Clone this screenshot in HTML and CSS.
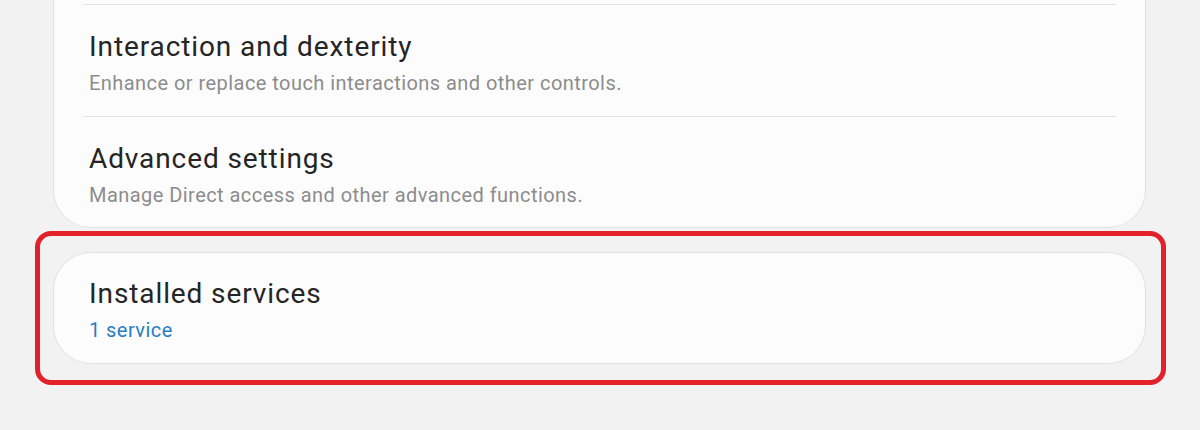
FILE: index.html
```html
<!DOCTYPE html>
<html>
<head>
<meta charset="utf-8">
<link rel="stylesheet" href="styles.css">
</head>
<body>
<div class="page">
  <div class="card card-top">
    <div class="divider"></div>
    <div class="row">
      <div class="title">Interaction and dexterity</div>
      <div class="sub">Enhance or replace touch interactions and other controls.</div>
    </div>
    <div class="divider"></div>
    <div class="row row-last">
      <div class="title">Advanced settings</div>
      <div class="sub">Manage Direct access and other advanced functions.</div>
    </div>
  </div>
  <div class="highlight">
    <div class="card card-single">
      <div class="row row-single">
        <div class="title">Installed services</div>
        <div class="sub blue">1 service</div>
      </div>
    </div>
  </div>
</div>
</body>
</html>
```
FILE: styles.css
```css
html, body {
  margin: 0;
  padding: 0;
  background: #f2f2f2;
  width: 1200px;
  height: 430px;
  overflow: hidden;
  font-family: Roboto, "Liberation Sans", sans-serif;
}
.page {
  padding: 0 54px 0 53px;
}
.card {
  background: #fcfcfc;
  border: 1px solid #e2e2e2;
}
.card-top {
  border-top: none;
  border-radius: 0 0 38px 38px;
  padding: 4px 29px 0 29px;
}
.divider {
  height: 1px;
  background: #e4e4e4;
}
.row {
  box-sizing: border-box;
  padding: 25px 5px 0 6px;
  height: 111px;
}
.row-last {
  height: 110px;
}
.row-single {
  height: 110px;
  padding-top: 24px;
}
.title {
  font-size: 28px;
  line-height: 34px;
  letter-spacing: 0.9px;
  color: #252525;
}
.sub {
  margin-top: 6px;
  font-size: 20px;
  line-height: 26px;
  letter-spacing: 0.45px;
  color: #8c8c8c;
}
.sub.blue {
  color: #2b7dc2;
}
.highlight {
  margin: 3px -20px 0 -18px;
  border: 5px solid #e2212b;
  border-radius: 16px;
  padding: 16px 15px 16px 13px;
}
.card-single {
  border-radius: 38px;
  padding: 0 29px;
}
```
